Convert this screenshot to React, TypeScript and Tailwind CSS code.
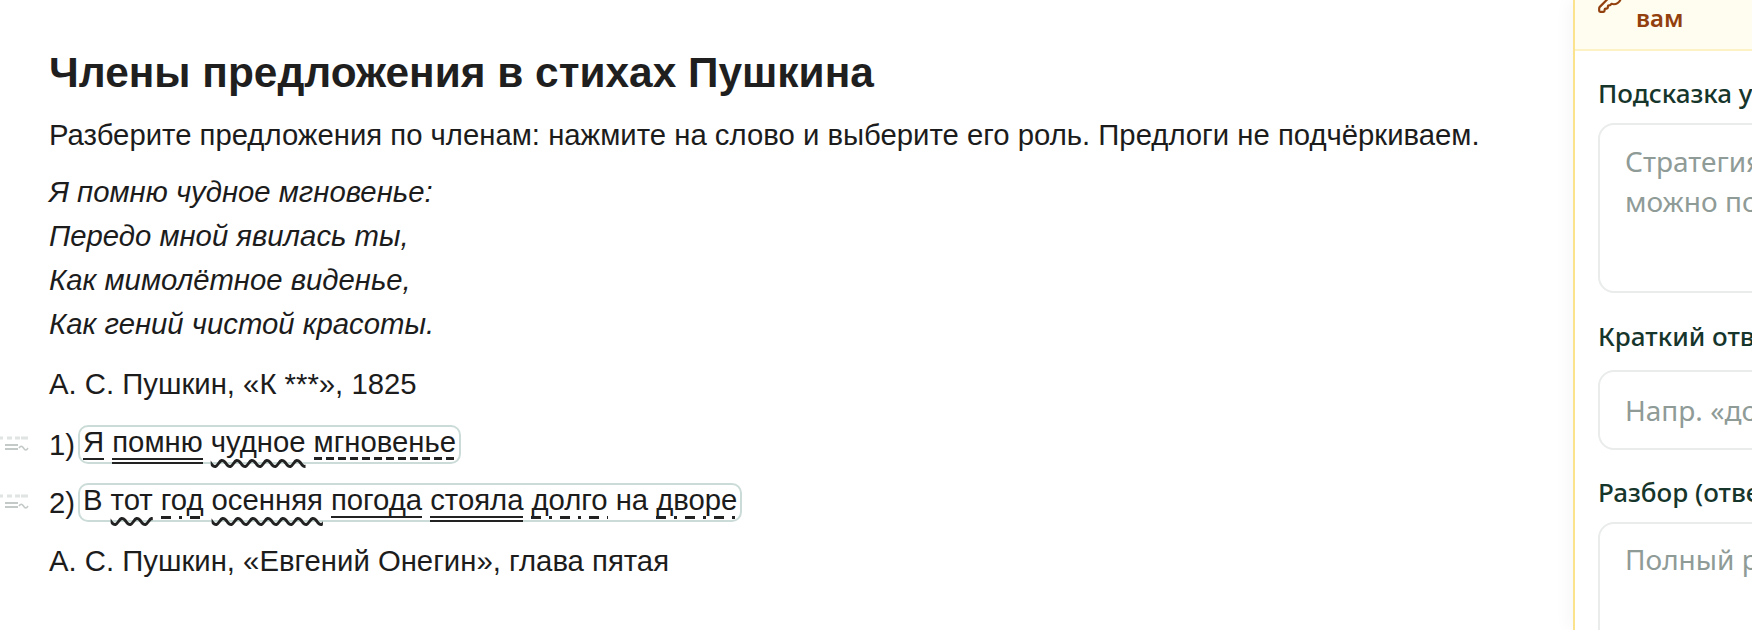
import { KeyRound } from "lucide-react";

const SANS = "font-['Liberation_Sans',Arial,sans-serif]";
const NOTO = "font-['Noto_Sans','Open_Sans',sans-serif]";

const fieldClass =
  "block w-[460px] resize-none rounded-[16px] border-2 border-[#e9ecea] bg-white px-[25px] text-[28px] text-[#1a3a2e] placeholder:text-[#8f9b97] outline-none";
const labelClass = "text-[26px] leading-[28px] font-medium text-[#16352b] whitespace-nowrap";

const SOLID = "h-[33px] bg-[linear-gradient(#222,#222)] bg-[length:100%_2px] bg-[position:0_100%] bg-no-repeat";
const DOUBLE =
  "h-[37px] bg-[linear-gradient(#222_0,#222_2px,transparent_2px,transparent_4px,#222_4px,#222_6px)] bg-[length:100%_6px] bg-[position:0_100%] bg-no-repeat";
const WAVY = "underline decoration-wavy decoration-[#222] decoration-[3px] underline-offset-[7px]";
const DASHED =
  "h-[33px] bg-[repeating-linear-gradient(90deg,#222_0,#222_8px,transparent_8px,transparent_12px)] bg-[length:100%_3px] bg-[position:0_100%] bg-no-repeat";
const DASHDOT =
  "h-[34px] bg-[repeating-linear-gradient(90deg,#222_0,#222_10px,transparent_10px,transparent_18px,#222_18px,#222_21px,transparent_21px,transparent_29px)] bg-[length:100%_3px] bg-[position:0_100%] bg-no-repeat";

type Word = { text: string; line?: string };

const rowOne: Word[] = [
  { text: "Я", line: SOLID },
  { text: "помню", line: DOUBLE },
  { text: "чудное", line: WAVY },
  { text: "мгновенье", line: DASHED },
];

const rowTwo: Word[] = [
  { text: "В" },
  { text: "тот", line: WAVY },
  { text: "год", line: DASHDOT },
  { text: "осенняя", line: WAVY },
  { text: "погода", line: SOLID },
  { text: "стояла", line: DOUBLE },
  { text: "долго", line: DASHDOT },
  { text: "на" },
  { text: "дворе", line: DASHDOT },
];

function SyntaxGlyph() {
  return (
    <svg width="30" height="24" viewBox="0 0 30 24" fill="none" stroke="#c4cac8" strokeWidth="2">
      <path d="M0 5h3M7 5h5M15 5h5M21 5h7" stroke="#e0e4e3" strokeWidth="3" />
      <path d="M5 12h13" />
      <path d="M5 16h13" />
      <path d="M19 15c1.500-2.500 3-2.500 4.500 0s3 2.500 4.500 0" strokeWidth="1.500" />
    </svg>
  );
}

function Sentence({ num, words }: { num: string; words: Word[] }) {
  return (
    <div className="-ml-[49px] flex h-[39px] items-center text-[29.3px]">
      <div className="w-[30px] shrink-0">
        <SyntaxGlyph />
      </div>
      <span className="ml-[19px] mr-[3px] leading-[29px]">{num}</span>
      <div className="flex h-[39px] items-start gap-[8px] rounded-[10px] border-2 border-[#cbdcd8] px-[3px]">
        {words.map((w, i) => (
          <span key={i} className={`inline-block leading-[29px] ${w.line ?? ""}`}>
            {w.text}
          </span>
        ))}
      </div>
    </div>
  );
}

export default function App() {
  return (
    <div className={`flex h-[630px] w-[1752px] overflow-hidden bg-white ${SANS} text-[#1c1c1c]`}>
      <main className="w-[1573px] shrink-0 pl-[49px] pt-[48px]">
        <h1 className="text-[42.4px] leading-[50px] font-bold text-[#1f1f1f]">Члены предложения в стихах Пушкина</h1>
        <p className="mt-[23px] text-[29.3px] leading-[28px]">
          Разберите предложения по членам: нажмите на слово и выберите его роль. Предлоги не подчёркиваем.
        </p>
        <div className="mt-[21px] text-[29.3px] italic leading-[44px]">
          <div>Я помню чудное мгновенье:</div>
          <div>Передо мной явилась ты,</div>
          <div>Как мимолётное виденье,</div>
          <div>Как гений чистой красоты.</div>
        </div>
        <p className="mt-[24px] text-[29.3px] leading-[28px]">А. С. Пушкин, «К ***», 1825</p>
        <div className="mt-[27px] flex flex-col gap-[19px]">
          <Sentence num="1)" words={rowOne} />
          <Sentence num="2)" words={rowTwo} />
        </div>
        <p className="mt-[25px] text-[29.3px] leading-[28px]">А. С. Пушкин, «Евгений Онегин», глава пятая</p>
      </main>
      <aside className={`w-[520px] shrink-0 border-l-2 border-[#fbe38e] shadow-[-6px_0_14px_rgba(0,0,0,0.03)] ${NOTO}`}>
        <div className="flex h-[51px] items-end gap-[13px] border-b-2 border-[#fdf2c4] bg-[#fffcf0] pb-[17px] pl-[22px]">
          <KeyRound size={26} color="#92400e" strokeWidth={2} className="mb-[18px]" />
          <span className="text-[24px] leading-[28px] font-semibold text-[#92400e]">вам</span>
        </div>
        <div className="pl-[23px] pt-[28px]">
          <div className={labelClass}>Подсказка учителю</div>
          <textarea
            rows={2}
            className={`${fieldClass} mt-[16px] h-[170px] pt-[16px] leading-[40px]`}
            placeholder="Стратегия решения: что можно подчеркнуть"
          />
          <div className={`${labelClass} mt-[29px]`}>Краткий ответ</div>
          <input className={`${fieldClass} mt-[20px] h-[80px]`} placeholder="Напр. «дополнение»" />
          <div className={`${labelClass} mt-[28px]`}>Разбор (ответ для учителя)</div>
          <textarea
            rows={3}
            className={`${fieldClass} mt-[16px] h-[170px] pt-[15px] leading-[40px]`}
            placeholder="Полный разбор"
          />
        </div>
      </aside>
    </div>
  );
}
